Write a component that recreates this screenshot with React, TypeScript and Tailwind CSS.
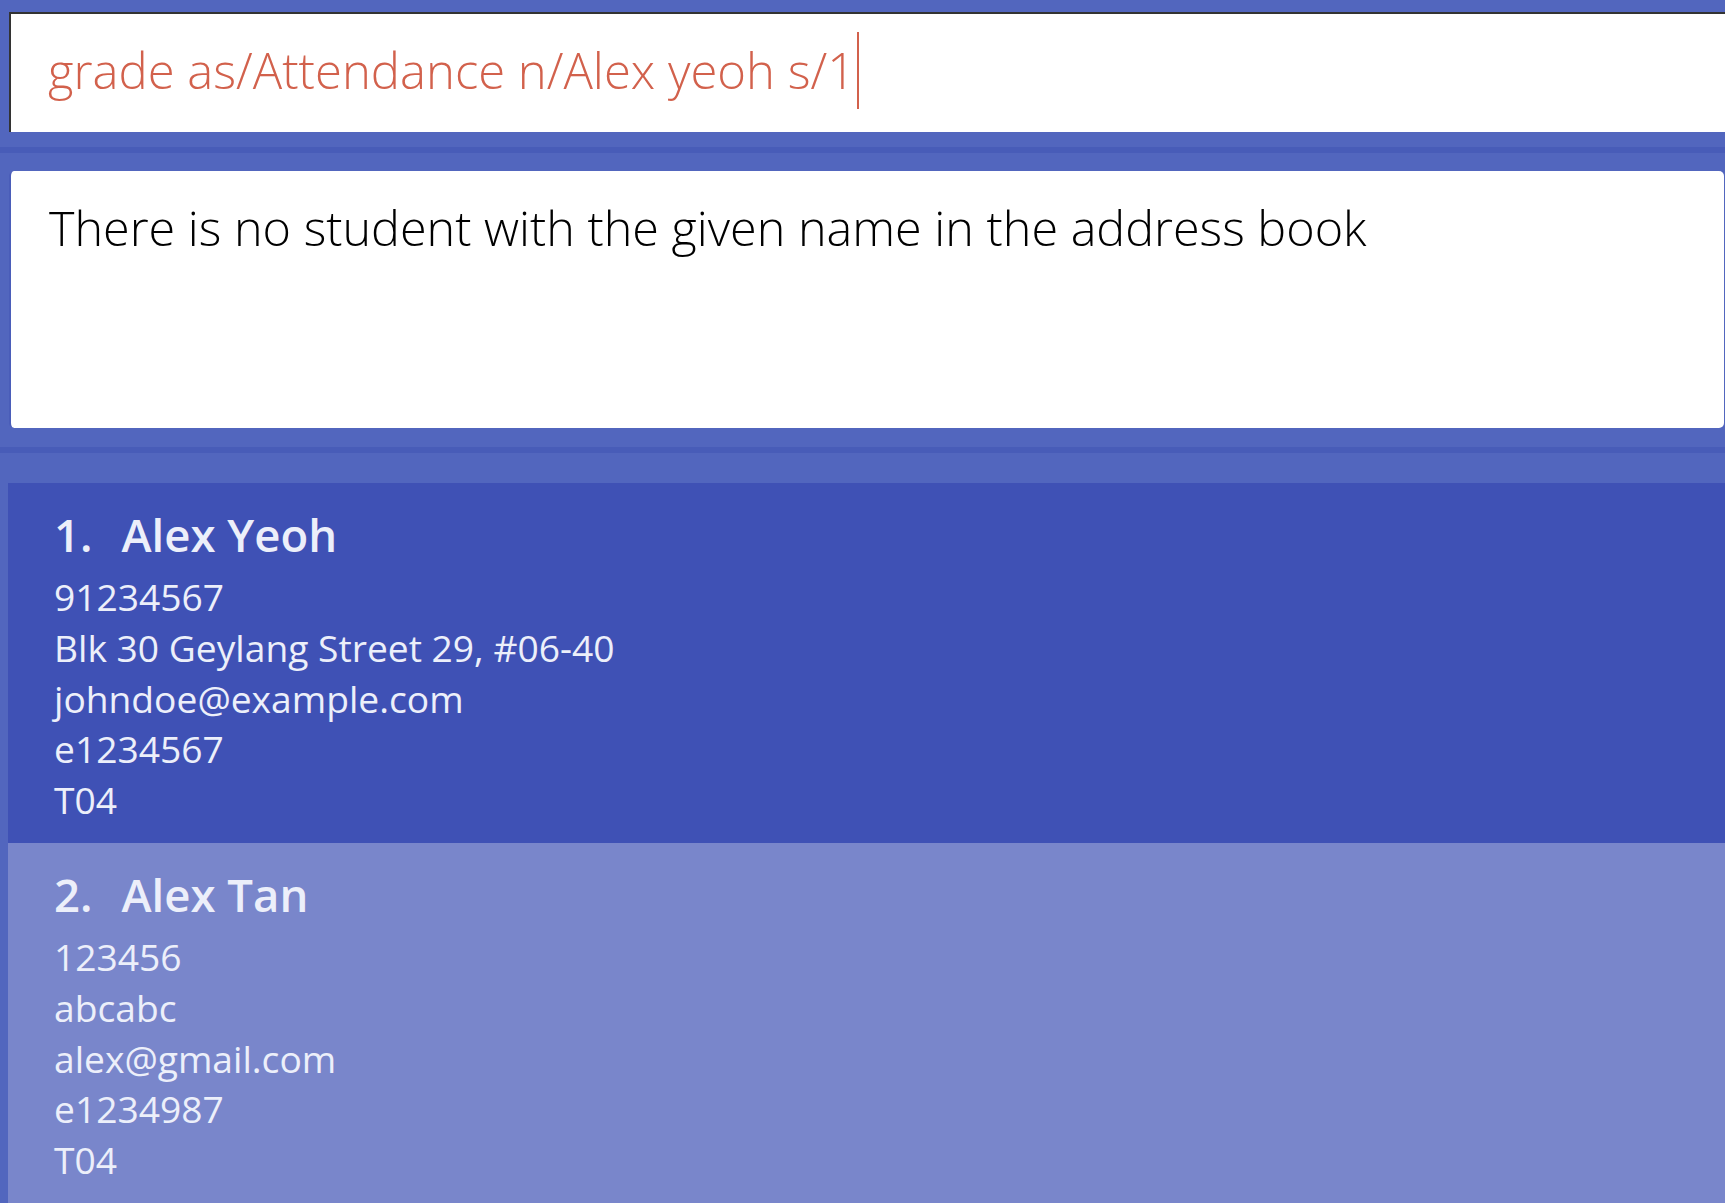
import React from 'react';

type Student = {
  name: string;
  phone: string;
  address: string;
  email: string;
  studentId: string;
  tutorial: string;
};

const students: Student[] = [
  {
    name: 'Alex Yeoh',
    phone: '91234567',
    address: 'Blk 30 Geylang Street 29, #06-40',
    email: 'johndoe@example.com',
    studentId: 'e1234567',
    tutorial: 'T04',
  },
  {
    name: 'Alex Tan',
    phone: '123456',
    address: 'abcabc',
    email: 'alex@gmail.com',
    studentId: 'e1234987',
    tutorial: 'T04',
  },
];

function StudentCard({ student, index, selected }: { student: Student; index: number; selected: boolean }) {
  return (
    <div
      className={`h-[360px] pl-[46px] pt-[21px] text-[#eceffa] ${selected ? 'bg-[#3f51b5]' : 'bg-[#7986cb]'}`}
    >
      <div className="flex gap-[29px] text-[45.5px] leading-[60px] font-semibold">
        <span>{index}.</span>
        <span>{student.name}</span>
      </div>
      <div className="mt-[8px] text-[37.2px] leading-[50.8px]">
        <div>{student.phone}</div>
        <div>{student.address}</div>
        <div>{student.email}</div>
        <div>{student.studentId}</div>
        <div>{student.tutorial}</div>
      </div>
    </div>
  );
}

export default function App() {
  return (
    <div className="w-[1725px] h-[1203px] overflow-hidden bg-[#5266be] font-['Open_Sans','Noto_Sans',sans-serif]">
      {/* Command box */}
      <div className="pt-[12px] pl-[9px]">
        <div className="h-[120px] bg-white border-t-2 border-l-2 border-[#333333] flex items-start pl-[37px] pt-[18px]">
          <span className="text-[49px] leading-[77px] font-light text-[#d2614c] whitespace-pre">
            grade as/Attendance n/Alex yeoh s/1
          </span>
          <span className="w-[2px] h-[77px] bg-[#d2614c] ml-[2px]" />
        </div>
      </div>

      <div className="h-[15px]" />
      <div className="h-[6px] bg-[#485cb8]" />
      <div className="h-[18px]" />

      {/* Result display */}
      <div className="pl-[9px] pr-[1px]">
        <div className="h-[257px] bg-white rounded-[5px] border-l-2 border-[#4a5db9] pl-[38px] pt-[26px]">
          <p className="text-[48.5px] leading-[60px] font-light text-black">
            There is no student with the given name in the address book
          </p>
        </div>
      </div>

      <div className="h-[19px]" />
      <div className="h-[6px] bg-[#485cb8]" />
      <div className="h-[30px]" />

      {/* Student list */}
      <div className="pl-[8px]">
        {students.map((s, i) => (
          <StudentCard key={s.studentId} student={s} index={i + 1} selected={i === 0} />
        ))}
      </div>
    </div>
  );
}
